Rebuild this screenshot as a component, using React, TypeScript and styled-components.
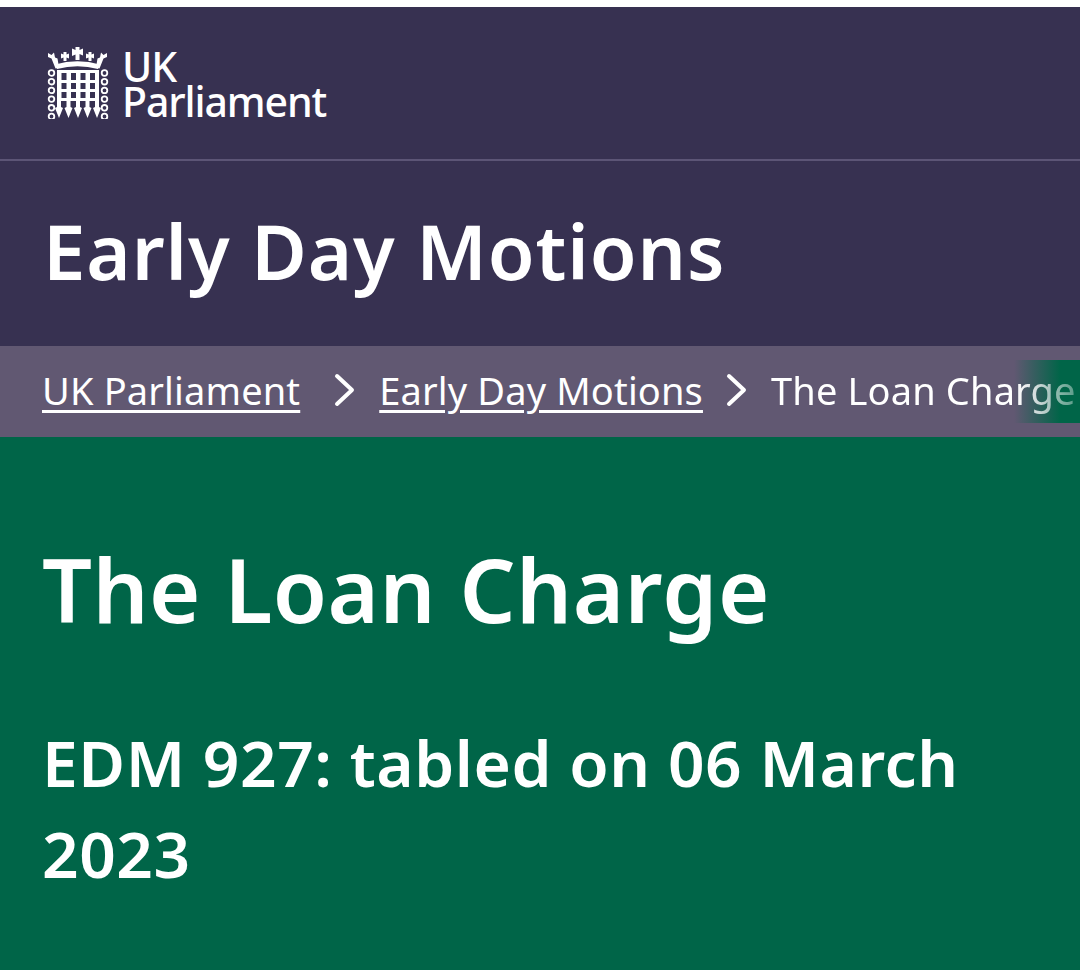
import styled, { createGlobalStyle } from "styled-components"

const Global = createGlobalStyle`
    html, body {
        margin: 0;
        padding: 0;
        background: #fff;
    }
    body {
        font-family: "Noto Sans", "Open Sans", sans-serif;
        color: #fff;
    }
`

const Page = styled.div`
    width: 1080px;
    height: 970px;
    padding-top: 7px;
    box-sizing: border-box;
    display: flex;
    flex-direction: column;
    overflow: hidden;
`

const LogoBar = styled.div`
    height: 112px;
    flex: none;
    background: #373151;
    border-bottom: 2px solid #5c5576;
    display: flex;
    align-items: flex-start;
    padding: 40px 0 0 47px;
    gap: 13px;
`

const Wordmark = styled.div`
    font-size: 41px;
    line-height: 35px;
    letter-spacing: -1.1px;
    font-weight: 500;
    padding-top: 2px;
`

const TitleBand = styled.div`
    height: 179px;
    flex: none;
    background: #373151;
    display: flex;
    align-items: center;
    padding: 0 0 6px 43px;
`

const SectionTitle = styled.h1`
    margin: 0;
    font-size: 76px;
    font-weight: 600;
    line-height: 1;
    letter-spacing: 0.9px;
`

const Crumbs = styled.nav`
    position: relative;
    height: 87px;
    flex: none;
    background: #615872;
    display: flex;
    align-items: center;
    padding: 0 0 4px 42px;
    font-size: 38px;
    letter-spacing: 0.15px;
    white-space: nowrap;
    overflow: hidden;
`

const CrumbLink = styled.a`
    color: #fff;
    text-decoration: underline;
    text-decoration-thickness: 3px;
    text-underline-offset: 5px;
`

const CrumbCurrent = styled.span`
    position: relative;
    z-index: 1;
    color: #fff;
    mask-image: linear-gradient(to right, #000 calc(100% - 60px), rgba(0, 0, 0, 0.35));
`

const Chevron = styled.svg<{ $left: number; $right: number }>`
    flex: none;
    margin: 0 ${(p) => p.$right}px 0 ${(p) => p.$left}px;
`

const Fade = styled.div`
    position: absolute;
    right: 0;
    top: 14px;
    width: 66px;
    height: 63px;
    background: linear-gradient(to right, rgba(0, 101, 72, 0), #006548 70%);
`

const Hero = styled.main`
    flex: 1;
    background: #006548;
    padding: 108px 40px 0 42px;
`

const Heading = styled.h2`
    margin: 0;
    font-size: 88px;
    font-weight: 600;
    line-height: 1;
    letter-spacing: 0.45px;
`

const Sub = styled.p`
    margin: 84px 0 0;
    font-size: 64px;
    font-weight: 600;
    line-height: 91px;
    letter-spacing: 0.55px;
`

const LogoMark = styled.svg`
    flex: none;
`

// portcullis with crown, drawn by eye from the reference
function Portcullis() {
    const links = [0, 1, 2, 3, 4, 5]
    const bars = [12, 21.5, 31, 40.5, 50]
    const holes = [14.5, 24, 33.5, 43]
    const rows = [
        { y: 26, h: 7 },
        { y: 36, h: 6 },
        { y: 45, h: 6 },
    ]
    return (
        <LogoMark width="62" height="72" viewBox="0 0 62 72" fill="#fff">
            {/* crown */}
            <path d="M28.500 0h4v3l3.500-1.500v7l-3.500-1.500v6h-4V7.500L25 9V1.500l3.500 1.500z" />
            <path d="M16.500 5h3v2.500l2.500-1v5l-2.500-1V14h-3v-3.500l-2.500 1v-5l2.500 1zM41.500 5h3v2.500l2.500-1v5l-2.500-1V14h-3v-3.500l-2.500 1v-5l2.500 1z" />
            <path d="M1 6l3.500 2L7 5.500l1 5 2.500 1L12 20.500l-3.500 1L4.500 11.500 1 10zM60 6l-3.500 2L54 5.500l-1 5-2.500 1L49 20.500l3.500 1 4-10 3.500-1.500z" />
            <path d="M8 17.500Q30.500 11 53 17.500l-2 4.500Q30.500 16.500 10 22z" />
            {/* chains */}
            <g fill="none" stroke="#fff" strokeWidth="1.800">
                {links.map((i) => (
                    <g key={i}>
                        <circle cx="4.500" cy={26 + i * 8.7} r="2.800" />
                        <circle cx="57.500" cy={26 + i * 8.7} r="2.800" />
                    </g>
                ))}
            </g>
            {/* grid */}
            <rect x="10" y="23" width="42" height="31" />
            {rows.map((r) =>
                holes.map((x) => (
                    <rect key={`${r.y}-${x}`} x={x} y={r.y} width="5" height={r.h} fill="#373151" />
                )),
            )}
            {bars.map((x) => (
                <path key={x} d={`M${x - 2} 54h4v6l2 1-4 10-4-10 2-1z`} />
            ))}
        </LogoMark>
    )
}

function Arrow({ left, right }: { left: number; right: number }) {
    return (
        <Chevron $left={left} $right={right} width="22" height="34" viewBox="0 0 22 34" fill="none">
            <path d="M3 3l15 14L3 31" stroke="#fff" strokeWidth="4" strokeLinecap="round" strokeLinejoin="round" />
        </Chevron>
    )
}

export default function App() {
    return (
        <>
            <Global />
            <Page>
                <LogoBar>
                    <Portcullis />
                    <Wordmark>
                        UK
                        <br />
                        Parliament
                    </Wordmark>
                </LogoBar>
                <TitleBand>
                    <SectionTitle>Early Day Motions</SectionTitle>
                </TitleBand>
                <Crumbs>
                    <CrumbLink>UK Parliament</CrumbLink>
                    <Arrow left={34} right={23} />
                    <CrumbLink>Early Day Motions</CrumbLink>
                    <Arrow left={23} right={23} />
                    <CrumbCurrent>The Loan Charge</CrumbCurrent>
                    <Fade />
                </Crumbs>
                <Hero>
                    <Heading>The Loan Charge</Heading>
                    <Sub>EDM 927: tabled on 06 March 2023</Sub>
                </Hero>
            </Page>
        </>
    )
}
